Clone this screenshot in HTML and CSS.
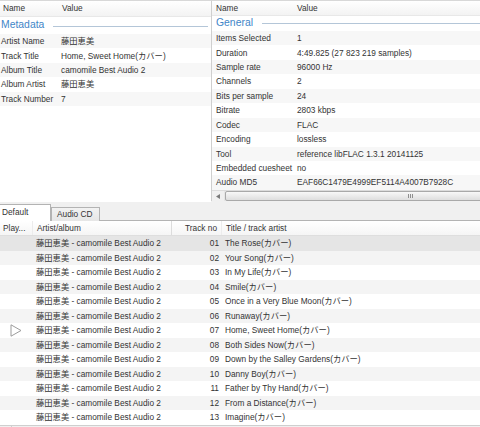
FILE: index.html
```html
<!DOCTYPE html>
<html>
<head>
<meta charset="utf-8">
<link rel="stylesheet" href="styles.css">
</head>
<body>
<div class="top">
  <div class="pane pane-left">
    <div class="ph"><span class="lc1 hpad">Name</span><span class="hval">Value</span></div>
    <div class="group gl"><span>Metadata</span><i></i></div>
    <div class="prow alt"><span class="lc1">Artist Name</span><span>藤田恵美</span></div>
    <div class="prow"><span class="lc1">Track Title</span><span>Home, Sweet Home(カバー)</span></div>
    <div class="prow alt"><span class="lc1">Album Title</span><span>camomile Best Audio 2</span></div>
    <div class="prow"><span class="lc1">Album Artist</span><span>藤田恵美</span></div>
    <div class="prow alt"><span class="lc1">Track Number</span><span>7</span></div>
  </div>
  <div class="pane pane-right">
    <div class="ph ph-r"><span class="rc1">Name</span><span>Value</span></div>
    <div class="group gr"><span>General</span><i></i></div>
    <div class="prow alt"><span class="rc1">Items Selected</span><span>1</span></div>
    <div class="prow"><span class="rc1">Duration</span><span>4:49.825 (27 823 219 samples)</span></div>
    <div class="prow alt"><span class="rc1">Sample rate</span><span>96000 Hz</span></div>
    <div class="prow"><span class="rc1">Channels</span><span>2</span></div>
    <div class="prow alt"><span class="rc1">Bits per sample</span><span>24</span></div>
    <div class="prow"><span class="rc1">Bitrate</span><span>2803 kbps</span></div>
    <div class="prow alt"><span class="rc1">Codec</span><span>FLAC</span></div>
    <div class="prow"><span class="rc1">Encoding</span><span>lossless</span></div>
    <div class="prow alt"><span class="rc1">Tool</span><span>reference libFLAC 1.3.1 20141125</span></div>
    <div class="prow"><span class="rc1">Embedded cuesheet</span><span>no</span></div>
    <div class="prow alt"><span class="rc1">Audio MD5</span><span>EAF66C1479E4999EF5114A4007B7928C</span></div>
    <div class="hscroll">
      <span class="sarrow"><svg width="4" height="5" viewBox="0 0 4 5"><polygon points="4,0 0,2.5 4,5" fill="#7a7a7a"/></svg></span>
      <div class="thumb"><svg class="grip" width="5" height="4" viewBox="0 0 5 4"><path d="M0.5 0V4M2.5 0V4M4.5 0V4" stroke="#8f8f8f" stroke-width="1"/></svg></div>
    </div>
  </div>
</div>
<div class="tabs">
  <div class="tab tab-active">Default</div>
  <div class="tab">Audio CD</div>
</div>
<div class="list">
  <div class="lh">
    <span class="c-play hsep">Play...</span>
    <span class="c-art hsep2">Artist/album</span>
    <span class="c-no hsep">Track no</span>
    <span class="c-title">Title / track artist</span>
  </div>
  <div class="lrow sel"><span class="c-play"></span><span class="c-art">藤田恵美 - camomile Best Audio 2</span><span class="c-no">01</span><span class="c-title">The Rose(カバー)</span></div>
  <div class="lrow even"><span class="c-play"></span><span class="c-art">藤田恵美 - camomile Best Audio 2</span><span class="c-no">02</span><span class="c-title">Your Song(カバー)</span></div>
  <div class="lrow"><span class="c-play"></span><span class="c-art">藤田恵美 - camomile Best Audio 2</span><span class="c-no">03</span><span class="c-title">In My Life(カバー)</span></div>
  <div class="lrow even"><span class="c-play"></span><span class="c-art">藤田恵美 - camomile Best Audio 2</span><span class="c-no">04</span><span class="c-title">Smile(カバー)</span></div>
  <div class="lrow"><span class="c-play"></span><span class="c-art">藤田恵美 - camomile Best Audio 2</span><span class="c-no">05</span><span class="c-title">Once in a Very Blue Moon(カバー)</span></div>
  <div class="lrow even"><span class="c-play"></span><span class="c-art">藤田恵美 - camomile Best Audio 2</span><span class="c-no">06</span><span class="c-title">Runaway(カバー)</span></div>
  <div class="lrow"><span class="c-play"><svg width="12" height="13" viewBox="0 0 12 13"><polygon points="1,0.8 11,6.5 1,12.2" fill="none" stroke="#9c9c9c" stroke-width="1"/></svg></span><span class="c-art">藤田恵美 - camomile Best Audio 2</span><span class="c-no">07</span><span class="c-title">Home, Sweet Home(カバー)</span></div>
  <div class="lrow even"><span class="c-play"></span><span class="c-art">藤田恵美 - camomile Best Audio 2</span><span class="c-no">08</span><span class="c-title">Both Sides Now(カバー)</span></div>
  <div class="lrow"><span class="c-play"></span><span class="c-art">藤田恵美 - camomile Best Audio 2</span><span class="c-no">09</span><span class="c-title">Down by the Salley Gardens(カバー)</span></div>
  <div class="lrow even"><span class="c-play"></span><span class="c-art">藤田恵美 - camomile Best Audio 2</span><span class="c-no">10</span><span class="c-title">Danny Boy(カバー)</span></div>
  <div class="lrow"><span class="c-play"></span><span class="c-art">藤田恵美 - camomile Best Audio 2</span><span class="c-no">11</span><span class="c-title">Father by Thy Hand(カバー)</span></div>
  <div class="lrow even"><span class="c-play"></span><span class="c-art">藤田恵美 - camomile Best Audio 2</span><span class="c-no">12</span><span class="c-title">From a Distance(カバー)</span></div>
  <div class="lrow"><span class="c-play"></span><span class="c-art">藤田恵美 - camomile Best Audio 2</span><span class="c-no">13</span><span class="c-title">Imagine(カバー)</span></div>
</div>
<div class="bottom"><span class="bcorner"></span></div>
</body>
</html>
```
FILE: styles.css
```css
* { box-sizing: border-box; }
html, body { margin: 0; padding: 0; }
body {
  width: 480px;
  height: 427px;
  overflow: hidden;
  background: #f0f0f0;
  font-family: "Liberation Sans", "Noto Sans CJK JP", sans-serif;
  font-size: 8.3px;
  color: #333333;
  line-height: 1;
}
.top { display: flex; height: 203px; }
.pane { background: #fff; overflow: hidden; }
.pane-left { width: 211px; height: 202px; border-top: 1px solid #d8d8d8; }
.pane-right {
  flex: 1;
  height: 201px;
  border-left: 1px solid #cfcfcf;
  border-top: 1px solid #d8d8d8;
  display: flex;
  flex-direction: column;
}
.ph {
  display: flex;
  align-items: center;
  height: 16px;
  background: linear-gradient(#ffffff, #f3f3f3);
  border-bottom: 1px solid #e8e8e8;
  white-space: nowrap;
  flex: none;
}
.ph-r { height: 15px; }
.lc1 { width: 61px; flex: none; padding-left: 1px; }
.hpad { padding-left: 3px; }
.hval { padding-left: 1px; }
.rc1 { width: 85px; flex: none; padding-left: 4px; }
.group {
  display: flex;
  align-items: center;
  height: 17px;
  color: #3f86c8;
  font-size: 10.4px;
  white-space: nowrap;
  flex: none;
}
.group i { flex: 1; height: 1px; background: #b4c6d8; margin-left: 9px; }
.gl { padding-left: 1px; padding-right: 3px; }
.gl i { margin-top: 1px; }
.gr { height: 15px; padding-left: 4px; }
.prow {
  display: flex;
  align-items: center;
  height: 14.45px;
  white-space: nowrap;
  flex: none;
}
.prow.alt { background: #f7f7f7; }
.hscroll {
  margin-top: auto;
  height: 11px;
  flex: none;
  display: flex;
  align-items: stretch;
  background: #e6e6e6;
  border-top: 1px solid #dcdcdc;
}
.sarrow {
  width: 12px;
  flex: none;
  display: flex;
  align-items: center;
  justify-content: center;
  background: #f0f0f0;
}
.thumb {
  flex: 1;
  margin-left: 1px;
  margin-right: -4px;
  border: 1px solid #a9a9a9;
  border-radius: 2px;
  background: linear-gradient(#f8f8f8, #dedede);
  display: flex;
  align-items: center;
}
.grip { margin-left: 182px; }
.tabs {
  display: flex;
  align-items: flex-end;
  height: 17px;
}
.tab {
  height: 14px;
  width: 49px;
  padding-left: 5px;
  display: flex;
  align-items: center;
  background: linear-gradient(#f2f2f2, #e6e6e6);
  border: 1px solid #b3b3b3;
  border-bottom: none;
  margin-bottom: -1px;
  position: relative;
  white-space: nowrap;
}
.tab-active {
  height: 17px;
  width: 51px;
  padding-left: 2px;
  background: #fff;
  border-left: none;
  z-index: 1;
  padding-bottom: 1px;
}
.list {
  background: #fff;
  border-top: 1px solid #b3b3b3;
  height: 204.5px;
}
.lh {
  display: flex;
  align-items: stretch;
  height: 15px;
  background: linear-gradient(#ffffff, #f5f5f5);
  border-bottom: 1px solid #dedede;
  white-space: nowrap;
}
.lh span { display: flex; align-items: center; }
.hsep { border-right: 1px solid #ececec; }
.hsep2 { border-right: 1px solid #dcdcdc; }
.lrow {
  display: flex;
  align-items: center;
  height: 14.5px;
  white-space: nowrap;
}
.lrow.even { background: #f4f4f4; }
.lrow.sel { background: #e5e5e5; }
.c-play {
  width: 33px;
  flex: none;
  padding-left: 3px;
  display: flex;
  align-items: center;
}
.lrow .c-play { padding-left: 10px; }
.c-art { width: 139px; flex: none; padding-left: 3px; }
.lh .c-art { padding-left: 4px; }
.c-no { width: 50px; flex: none; text-align: right; padding-right: 3px; }
.lh .c-no { justify-content: flex-end; padding-right: 4px; }
.c-title { flex: 1; padding-left: 3px; }
.lh .c-title { padding-left: 4px; }
.bottom {
  height: 4px;
  border-top: 1px solid #cfcfcf;
  display: flex;
}
.bcorner { width: 12px; border-right: 1px solid #cfcfcf; background: #f0f0f0; }
```
